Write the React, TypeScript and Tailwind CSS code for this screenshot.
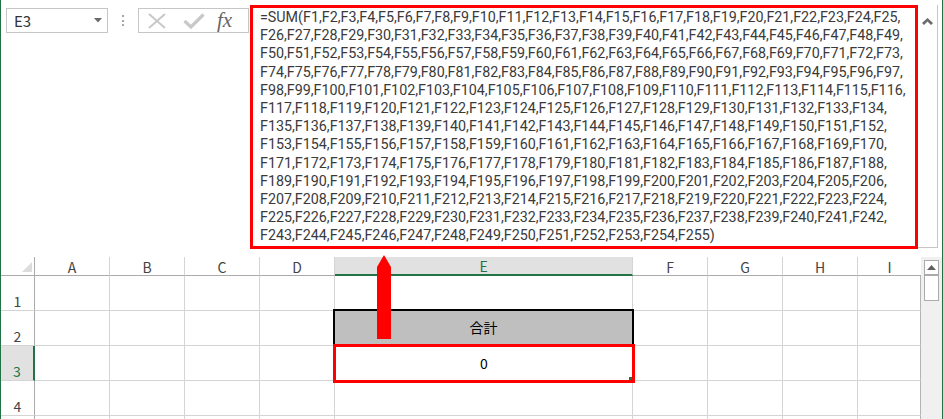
import React from 'react';

const SEGMENTS: [number, number][] = [
  [1, 25], [26, 49], [50, 73], [74, 97], [98, 116], [117, 134], [135, 152],
  [153, 170], [171, 188], [189, 206], [207, 224], [225, 242], [243, 255],
];

const LINES = SEGMENTS.map(([a, b], i) => {
  const refs: string[] = [];
  for (let n = a; n <= b; n++) refs.push(`F${n}`);
  const head = i === 0 ? '=SUM(' : '';
  const tail = i === SEGMENTS.length - 1 ? ')' : ',';
  return head + refs.join(',') + tail;
});

const COLS = [
  { label: 'A', w: 'w-[75px]' },
  { label: 'B', w: 'w-[75px]' },
  { label: 'C', w: 'w-[75px]' },
  { label: 'D', w: 'w-[75px]' },
  { label: 'E', w: 'w-[298px]' },
  { label: 'F', w: 'w-[75px]' },
  { label: 'G', w: 'w-[75px]' },
  { label: 'H', w: 'w-[75px]' },
  { label: 'I', w: 'w-[63px]' },
];

// row 5 is only a sliver at the bottom edge, its number is not visible
const ROWS = [1, 2, 3, 4, 5];

const gridFont = { fontFamily: '"Noto Sans CJK JP", "Noto Sans", sans-serif' };

function FormulaBar() {
  return (
    <div className="flex h-[257px]">
      <div className="flex w-[249px] shrink-0 items-start pl-[5px] pt-[8px]">
        {/* name box */}
        <div className="flex h-[25px] w-[102px] items-center justify-between border border-[#c6c6c6] pl-[7px] pr-[5px]">
          <span className="text-[15px] leading-none text-[#333]" style={gridFont}>E3</span>
          <svg width="8" height="5" viewBox="0 0 8 5">
            <polygon points="0,0 8,0 4,4.5" fill="#6a6a6a" />
          </svg>
        </div>
        <div className="flex h-[25px] w-[30px] flex-col items-center justify-center gap-[2.5px]">
          <span className="h-[2px] w-[2px] bg-[#a6a6a6]" />
          <span className="h-[2px] w-[2px] bg-[#a6a6a6]" />
          <span className="h-[2px] w-[2px] bg-[#a6a6a6]" />
        </div>
        {/* cancel / enter / fx */}
        <div className="flex h-[25px] w-[111px] items-center border border-[#c6c6c6] pl-[9px]">
          <svg width="18" height="16" viewBox="0 0 18 16">
            <path d="M1 1 L17 15 M17 1 L1 15" stroke="#c8c8c8" strokeWidth="2" fill="none" />
          </svg>
          <svg width="22" height="16" viewBox="0 0 22 16" className="ml-[17px]">
            <path d="M1.5 8 L8 14 L20.5 1.5" stroke="#c8c8c8" strokeWidth="3.2" fill="none" />
          </svg>
          <span
            className="ml-[12px] text-[21px] italic leading-none text-[#666]"
            style={{ fontFamily: '"Liberation Serif", serif' }}
          >
            fx
          </span>
        </div>
      </div>

      <div className="mt-[5px] flex h-[243px] w-[688px] shrink-0 items-start border-b border-r border-[#c6c6c6]">
        <div
          className="h-[244px] w-[668px] shrink-0 border-[3px] border-[#ff0000] pl-[7px] text-[14.3px] leading-[18.2px] text-[#3a3a3a]"
          style={{ fontFamily: 'Roboto, "Liberation Sans", sans-serif' }}
        >
          {LINES.map((line) => (
            <div key={line} className="whitespace-nowrap">{line}</div>
          ))}
        </div>
        <div className="flex flex-1 justify-center pt-[13px]">
          <svg width="11" height="7" viewBox="0 0 11 7">
            <path d="M0 5 L5.5 0 L11 5 L9 7 L5.5 3.5 L2 7 Z" fill="#6b6b6b" />
          </svg>
        </div>
      </div>
    </div>
  );
}

function HeaderRow() {
  return (
    <div className="flex h-[19px]">
      <div className="flex w-[34px] shrink-0 items-end justify-end border-b border-r border-[#ababab] pb-[3px] pr-[2px]">
        <svg width="10" height="10" viewBox="0 0 10 10">
          <polygon points="10,0 10,10 0,10" fill="#dcdcdc" />
        </svg>
      </div>
      {COLS.map((c) => {
        const active = c.label === 'E';
        return (
          <div
            key={c.label}
            className={`${c.w} flex shrink-0 items-center justify-center pt-[1px] text-[14px] leading-none ${
              active
                ? 'border-b-2 border-b-[#217346] bg-[#e1e1e1] text-[#217346]'
                : 'border-b border-b-[#ababab] text-[#444]'
            } ${c.label === 'I' ? '' : 'border-r border-r-[#d4d4d4]'}`}
            style={gridFont}
          >
            {c.label}
          </div>
        );
      })}
    </div>
  );
}

function Row({ n }: { n: number }) {
  const active = n === 3;
  return (
    <div className="flex h-[35px]">
      <div
        className={`flex w-[34px] shrink-0 items-end justify-center border-b border-b-[#d4d4d4] pb-[1px] text-[14px] leading-[16px] ${
          active ? 'border-r-2 border-r-[#217346] bg-[#e1e1e1] text-[#217346]' : 'border-r border-r-[#ababab] text-[#444]'
        }`}
        style={gridFont}
      >
        {n < 5 ? n : null}
      </div>
      {COLS.map((c) => (
        <div
          key={c.label}
          className={`${c.w} relative shrink-0 border-b border-r border-b-[#d4d4d4] ${
            c.label === 'I' ? 'border-r-[#b4b4b4]' : 'border-r-[#d4d4d4]'
          }`}
        >
          {c.label === 'E' && n === 2 && (
            <div
              className="absolute left-[-2px] top-[-2px] z-10 flex h-[37px] w-[301px] items-center justify-center border-2 border-black bg-[#bfbfbf] text-[14px] text-black"
              style={gridFont}
            >
              合計
            </div>
          )}
          {c.label === 'E' && n === 3 && (
            <div
              className="absolute left-[-2px] top-[-2px] z-20 flex h-[39px] w-[302px] items-center justify-center border-[3px] border-[#ff0000] text-[14px] text-black"
              style={gridFont}
            >
              0
              <span className="absolute bottom-0 right-0 h-[3px] w-[3px] bg-[#217346]" />
            </div>
          )}
        </div>
      ))}
    </div>
  );
}

function Scrollbar() {
  return (
    <div className="flex h-full w-[21px] shrink-0 flex-col bg-[#f0f0f0] pl-[3px] pt-[3px]">
      <div className="flex h-[15px] w-[15px] items-center justify-center border border-[#ababab] bg-white">
        <svg width="9" height="5" viewBox="0 0 9 5">
          <polygon points="0,5 4.5,0 9,5" fill="#606060" />
        </svg>
      </div>
      <div className="h-[26px] w-[15px] border border-[#ababab] bg-white" />
    </div>
  );
}

export default function App() {
  return (
    <div className="relative h-[419px] w-[943px] overflow-hidden border-x border-[#217346] bg-white">
      <FormulaBar />
      <div className="flex h-[162px]">
        <div className="w-[920px] shrink-0">
          <HeaderRow />
          {ROWS.map((n) => (
            <Row key={n} n={n} />
          ))}
        </div>
        <Scrollbar />
      </div>
      {/* annotation arrow */}
      <svg className="absolute left-[376px] top-[255px] z-30" width="14" height="84" viewBox="0 0 14 84">
        <polygon points="0,12 7,0 14,12 14,84 0,84" fill="#ff0000" />
      </svg>
    </div>
  );
}
